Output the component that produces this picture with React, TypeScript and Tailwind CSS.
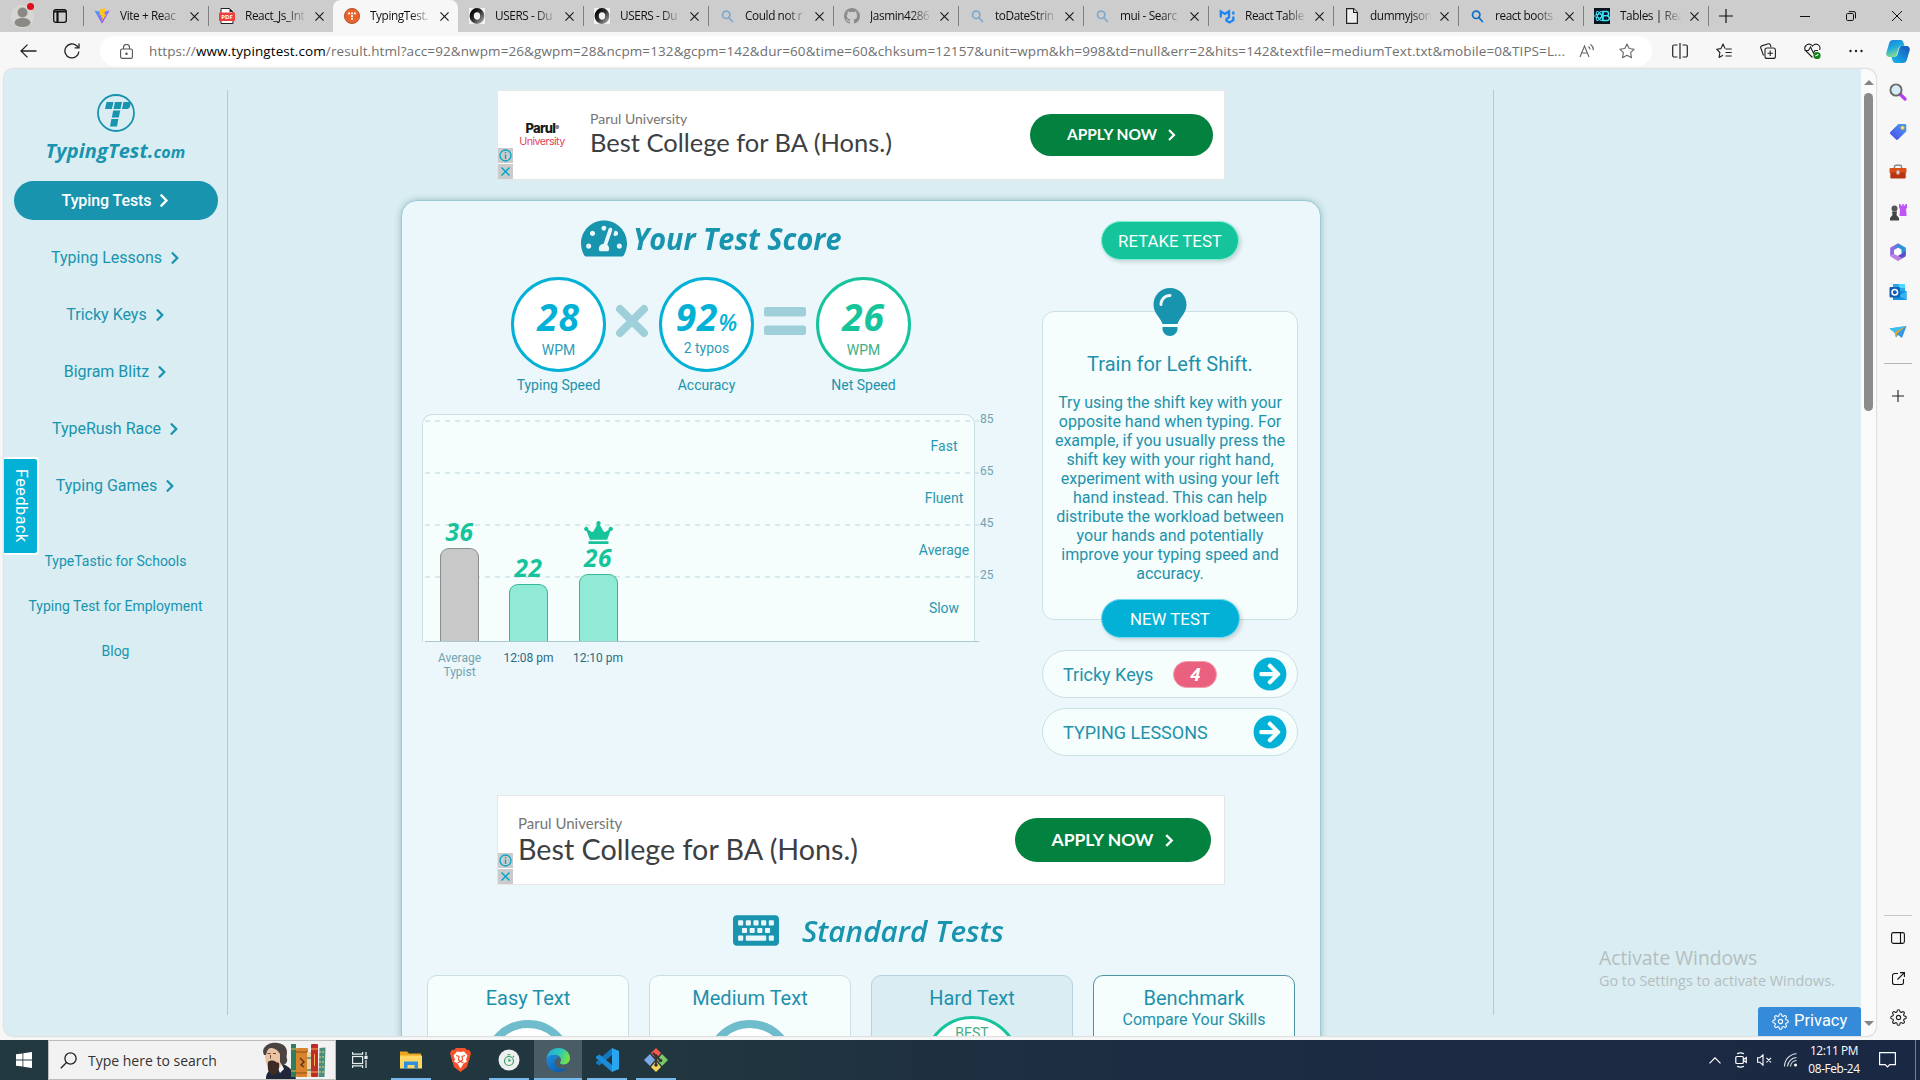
import React from "react";
import {
  FaTachometerAlt,
  FaCrown,
  FaKeyboard,
  FaArrowCircleRight,
  FaChevronRight,
} from "react-icons/fa";
import { FaLightbulb } from "react-icons/fa6";
import { FiSettings } from "react-icons/fi";

const SEGOE = "font-['Open_Sans','Noto_Sans',sans-serif]";

/* ---------- tab favicons ---------- */

const ViteIcon = () => (
  <svg viewBox="0 0 16 16" className="size-4">
    <defs>
      <linearGradient id="vt" x1="0" y1="0" x2="1" y2="1">
        <stop offset="0" stopColor="#41a8ff" />
        <stop offset="1" stopColor="#bd34fe" />
      </linearGradient>
    </defs>
    <path d="M0.3 2.5 8 15.8 15.7 2.5 8.2 3.9z" fill="url(#vt)" />
    <path d="M11.4.2 6 1.3 5.6 7.4l2-.4-.6 3 1.6-.5-1.2 4.2L12.6 6l-2.2.5z" fill="#ffc61c" />
  </svg>
);

const PdfIcon = () => (
  <svg viewBox="0 0 16 16" className="size-4">
    <path d="M2 .5h8.5l3.5 3.5v11.500H2z" fill="#fff" stroke="#222" />
    <path d="M10.500.5v3.500h3.500z" fill="#222" />
    <rect x="0" y="4.500" width="16" height="8.500" rx="1" fill="#f03c3c" />
    <text x="8" y="11" fontSize="6" fontWeight="700" fill="#fff" textAnchor="middle" fontFamily="Open Sans">
      PDF
    </text>
  </svg>
);

const TypingIcon = () => (
  <svg viewBox="0 0 16 16" className="size-4">
    <circle cx="8" cy="8" r="7.600" fill="#e8622a" stroke="#a8441c" strokeWidth=".8" />
    <g fill="#fff">
      <rect x="4" y="4.500" width="2" height="1.800" />
      <rect x="7" y="4.500" width="2" height="1.800" />
      <rect x="10" y="4.500" width="2" height="1.800" />
      <rect x="7" y="7.200" width="2" height="1.800" />
      <rect x="7" y="9.900" width="2" height="1.800" />
    </g>
  </svg>
);

const RingIcon = () => (
  <svg viewBox="0 0 16 16" className="size-4">
    <defs>
      <linearGradient id="rg" x1="0" y1="0" x2="1" y2="1">
        <stop offset="0" stopColor="#000" />
        <stop offset=".5" stopColor="#333" />
        <stop offset="1" stopColor="#999" />
      </linearGradient>
    </defs>
    <rect width="16" height="16" fill="#f2f2f2" />
    <ellipse cx="8" cy="8" rx="5.300" ry="5.800" fill="none" stroke="url(#rg)" strokeWidth="4.200" />
  </svg>
);

const SearchIcon = ({ c }: { c: string }) => (
  <svg viewBox="0 0 16 16" className="size-4" fill="none" stroke={c} strokeWidth="1.700">
    <circle cx="7.200" cy="6.800" r="3.700" />
    <path d="m9.800 9.500 3.600 4" strokeLinecap="round" />
  </svg>
);

const GithubIcon = () => (
  <svg viewBox="0 0 16 16" className="size-4" fill="#8c8c8c">
    <path d="M8 0C3.580 0 0 3.580 0 8c0 3.540 2.290 6.530 5.470 7.590.4.070.55-.17.55-.38 0-.19-.01-.82-.01-1.490-2.010.37-2.530-.49-2.690-.94-.09-.23-.48-.94-.82-1.130-.28-.15-.68-.52-.01-.53.63-.01 1.080.58 1.230.82.72 1.210 1.870.87 2.330.66.07-.52.28-.87.51-1.070-1.780-.2-3.640-.89-3.640-3.950 0-.87.31-1.590.82-2.150-.08-.2-.36-1.020.08-2.120 0 0 .67-.21 2.200.82a7.600 7.600 0 0 1 4 0c1.530-1.040 2.200-.82 2.200-.82.44 1.100.16 1.920.08 2.120.51.56.82 1.270.82 2.150 0 3.070-1.870 3.750-3.650 3.950.29.25.54.73.54 1.480 0 1.070-.01 1.930-.01 2.200 0 .21.15.46.55.38A8 8 0 0 0 8 0" />
  </svg>
);

const MuiIcon = () => (
  <svg viewBox="0 0 16 16" className="size-4" fill="none" stroke="#1a86f5" strokeWidth="2.300">
    <path d="M1.800 9.500V3.600L6 6l4-2.600v6L7.500 11v1.700l3 1.700 3.800-2.200V8.600" />
    <path d="M14.300 3.500v3" />
  </svg>
);

const FileIcon = () => (
  <svg viewBox="0 0 16 16" className="size-4" fill="#eee" stroke="#222" strokeWidth="1.200">
    <path d="M2.600.7h7l3.800 3.800v10.800H2.600z" />
    <path d="M9.600.7v3.800h3.800" />
  </svg>
);

const ReactBootIcon = () => (
  <svg viewBox="0 0 16 16" className="size-4" fill="none" stroke="#41e0fd">
    <rect width="16" height="16" fill="#07151c" stroke="none" />
    <ellipse cx="5.500" cy="8" rx="5" ry="2" />
    <ellipse cx="5.500" cy="8" rx="5" ry="2" transform="rotate(60 5.500 8)" />
    <ellipse cx="5.500" cy="8" rx="5" ry="2" transform="rotate(120 5.500 8)" />
    <path d="M9 3.500h3.500a2 2 0 0 1 0 4.300H9h4a2.300 2.300 0 0 1 0 4.700H9z" strokeWidth="1.600" fill="#07151c" />
  </svg>
);

const tabs: { title: string; icon: React.ReactNode; active?: boolean }[] = [
  { title: "Vite + Reac", icon: <ViteIcon /> },
  { title: "React_Js_Int", icon: <PdfIcon /> },
  { title: "TypingTest.", icon: <TypingIcon />, active: true },
  { title: "USERS - Du", icon: <RingIcon /> },
  { title: "USERS - Du", icon: <RingIcon /> },
  { title: "Could not r", icon: <SearchIcon c="#7fa9cf" /> },
  { title: "Jasmin4286", icon: <GithubIcon /> },
  { title: "toDateStrin", icon: <SearchIcon c="#7fa9cf" /> },
  { title: "mui - Searc", icon: <SearchIcon c="#7fa9cf" /> },
  { title: "React Table", icon: <MuiIcon /> },
  { title: "dummyjson", icon: <FileIcon /> },
  { title: "react boots", icon: <SearchIcon c="#0a6fc9" /> },
  { title: "Tables | Rea", icon: <ReactBootIcon /> },
];

const Close = () => (
  <svg viewBox="0 0 10 10" className="size-[9px]" stroke="#1b1b1b" strokeWidth="1.300">
    <path d="M.5.5l9 9M9.500.5l-9 9" />
  </svg>
);

function TabStrip() {
  return (
    <div className="flex h-8 items-center bg-[#cdcdcd]">
      <div className="flex w-[83px] shrink-0 items-center">
        <div className="relative ml-[11px] size-[23px] overflow-visible rounded-full bg-[#d8d6d2]">
          <svg viewBox="0 0 23 23" className="size-[23px]" fill="#8b8985">
            <circle cx="11.500" cy="7.500" r="5" />
            <ellipse cx="11.500" cy="17.500" rx="8" ry="4.500" />
          </svg>
          <span className="absolute -top-0.5 right-0 size-[7px] rounded-full bg-[#e00b1c]" />
        </div>
        <svg viewBox="0 0 14 14" className="ml-[19px] size-3.5" fill="none" stroke="#111" strokeWidth="1.300">
          <rect x=".7" y=".7" width="12.600" height="12.600" rx="2" />
          <path d="M1 2.500h12M4.500 3v10" strokeWidth="2.200" />
        </svg>
      </div>
      {tabs.map((t, i) => (
        <div
          key={i}
          className={
            t.active
              ? "relative flex h-8 w-[125px] shrink-0 items-center rounded-t-lg bg-[#f7f7f7]"
              : "relative flex h-8 w-[125px] shrink-0 items-center"
          }
        >
          {!t.active && i !== 3 && <span className="absolute left-0 h-5 w-px bg-[#7f7f7f]" />}
          <span className="ml-[11px] size-4">{t.icon}</span>
          <span
            className={`ml-[10px] w-[62px] whitespace-nowrap text-[11.8px] tracking-[-0.4px] text-[#111] [mask-image:linear-gradient(to_right,#000_66%,transparent)] ${SEGOE}`}
          >
            {t.title}
          </span>
          <span className="ml-[7.5px]">
            <Close />
          </span>
        </div>
      ))}
      <span className="h-5 w-px bg-[#7f7f7f]" />
      <svg viewBox="0 0 14 14" className="ml-[10px] size-3.5" stroke="#111" strokeWidth="1.200">
        <path d="M7 0v14M0 7h14" />
      </svg>
      <div className="ml-auto flex items-center">
        <svg viewBox="0 0 10 10" className="mr-[36px] size-2.5" stroke="#111">
          <path d="M0 5.500h10" />
        </svg>
        <svg viewBox="0 0 10 10" className="mr-[36px] size-2.5" fill="none" stroke="#111">
          <rect x=".5" y="2.500" width="7" height="7" rx="1.200" />
          <path d="M2.800.6H8a1.500 1.500 0 0 1 1.500 1.500v5.300" />
        </svg>
        <svg viewBox="0 0 10 10" className="mr-[18px] size-2.5" stroke="#111">
          <path d="M0 0l10 10M10 0L0 10" />
        </svg>
      </div>
    </div>
  );
}

function Toolbar() {
  return (
    <div className="flex h-[37px] items-center bg-[#f7f7f7] pt-px">
      <svg viewBox="0 0 17 14" className="ml-5 h-3.5 w-[17px]" fill="none" stroke="#222" strokeWidth="1.300">
        <path d="M16.500 7H1M7.500.6 1 7l6.500 6.400" />
      </svg>
      <svg viewBox="0 0 16 16" className="ml-[27px] size-4" fill="none" stroke="#222" strokeWidth="1.300">
        <path d="M14.900 8.500A7 7 0 1 1 12.700 2.800L14.500 4.500" />
        <path d="M15 .5v4.300h-4.300" />
      </svg>
      <div className="ml-[20px] flex h-[30px] w-[1552px] items-center rounded-full bg-white">
        <svg viewBox="0 0 13 15" className="ml-[20px] h-[15px] w-[13px] shrink-0" fill="none" stroke="#555" strokeWidth="1.100">
          <rect x=".6" y="5" width="11.800" height="9.400" rx="1.500" />
          <path d="M3.500 5V3.500a3 3 0 0 1 6 0V5" />
          <circle cx="6.500" cy="9.700" r=".7" fill="#555" />
        </svg>
        <span className={`ml-[16px] w-[1423px] shrink-0 whitespace-nowrap text-[13.5px] tracking-[0.105px] text-[#707070] ${SEGOE}`}>
          https://<span className="text-black">www.typingtest.com</span>
          /result.html?acc=92&amp;nwpm=26&amp;gwpm=28&amp;ncpm=132&amp;gcpm=142&amp;dur=60&amp;time=60&amp;chksum=12157&amp;unit=wpm&amp;kh=998&amp;td=null&amp;err=2&amp;hits=142&amp;textfile=mediumText.txt&amp;mobile=0&amp;TIPS=L...
        </span>
        <svg viewBox="0 0 16 16" className="ml-[7px] size-4" fill="none" stroke="#666" strokeWidth="1.100">
          <path d="M1 14 5.500 3 10 14M2.600 10h5.800M9.500 3.500a4 4 0 0 1 1.500 3M11.500 1.200a8 8 0 0 1 3 6" />
        </svg>
        <svg viewBox="0 0 16 16" className="ml-[24px] size-4" fill="none" stroke="#666" strokeWidth="1.100">
          <path d="m8 .9 2.200 4.600 5 .7-3.600 3.500.9 5L8 12.300l-4.500 2.400.9-5L.8 6.200l5-.7z" strokeLinejoin="round" />
        </svg>
      </div>
      <div className="flex items-center">
        <svg viewBox="0 0 16 16" className="ml-[20px] size-4" fill="none" stroke="#222" strokeWidth="1.200">
          <path d="M5.500 2H2.200A1.500 1.500 0 0 0 .7 3.500v9A1.500 1.500 0 0 0 2.200 14h3.300M10.500 2h3.300a1.500 1.500 0 0 1 1.500 1.500v9a1.500 1.500 0 0 1-1.500 1.500h-3.300M8 0v16" />
        </svg>
        <svg viewBox="0 0 16 16" className="ml-[28px] size-4" fill="none" stroke="#222" strokeWidth="1.100">
          <path d="M9 5.500 7 1 5 5.600l-4.400.6 3.300 3.300-.8 4.900L7 12.200M9.500 6h6.200M9.500 9.500h6.200M9.500 13h6.200" strokeLinejoin="round" />
        </svg>
        <svg viewBox="0 0 16 16" className="ml-[28px] size-4" fill="none" stroke="#222" strokeWidth="1.100">
          <rect x="5" y="5" width="10.400" height="10.400" rx="2" />
          <path d="M10.200 7.500v5.400M7.500 10.200h5.400M3.500 12.500.7 4.800a1.500 1.500 0 0 1 1-1.900L8.500.8a1.500 1.500 0 0 1 1.800 1L11 4" />
        </svg>
        <svg viewBox="0 0 17 16" className="ml-[28px] h-4 w-[17px]" fill="none" stroke="#222" strokeWidth="1.100">
          <path d="M8.500 14.500 2 8a4 4 0 0 1 0-5.500 4 4 0 0 1 6 0l.5.600.5-.600a4 4 0 0 1 6 0A4 4 0 0 1 15.500 7M.5 7.500h4L6.500 4l3 6 1.500-2.500h3" />
          <circle cx="13" cy="12.500" r="3.600" fill="#13801a" stroke="none" />
          <path d="m11.400 13 3-1.500" stroke="#fff" />
        </svg>
        <svg viewBox="0 0 16 4" className="ml-[27px] h-1 w-4" fill="#222">
          <circle cx="2.500" cy="2" r="1.200" />
          <circle cx="8" cy="2" r="1.200" />
          <circle cx="13.500" cy="2" r="1.200" />
        </svg>
        <svg viewBox="0 0 24 23" className="ml-[22px] h-[23px] w-6">
          <defs>
            <linearGradient id="cp1" x1="0" y1="0" x2=".4" y2="1">
              <stop offset="0" stopColor="#1681e0" />
              <stop offset=".5" stopColor="#1fa8dc" />
              <stop offset="1" stopColor="#86e08a" />
            </linearGradient>
            <linearGradient id="cp2" x1="0" y1="1" x2="1" y2="0">
              <stop offset="0" stopColor="#17b9f0" />
              <stop offset="1" stopColor="#1554b8" />
            </linearGradient>
          </defs>
          <path d="M7 0h7.500c2 0 2.700 1.500 3.200 3.200L18.500 6H16c-2 0-3 1-3.600 3l-1.800 6c-.6 1.600-1.500 2-3 2H3.500c-2.500 0-3.800-2-3.100-4.500L3.200 3C3.800 1 5 0 7 0" fill="url(#cp1)" />
          <path d="M17 23H9.500c-2 0-2.700-1.500-3.200-3.200L5.500 17H8c2 0 3-1 3.600-3l1.800-6c.6-1.600 1.500-2 3-2h4.100c2.500 0 3.800 2 3.100 4.500L20.800 20c-.6 2-1.800 3-3.800 3" fill="url(#cp2)" />
        </svg>
      </div>
    </div>
  );
}

/* ---------- page content ---------- */

const navItems = ["Typing Lessons", "Tricky Keys", "Bigram Blitz", "TypeRush Race", "Typing Games"];

function SiteNav() {
  return (
    <nav className="relative flex w-[223px] shrink-0 flex-col items-center pt-[25px] text-[#1894af]">
      <div className="flex w-[204px] flex-col items-center">
        <svg viewBox="0 0 38 38" className="size-[38px]">
          <circle cx="19" cy="19" r="18" fill="none" stroke="#1894af" strokeWidth="1.800" />
          <g fill="#1894af">
            <path d="M9.500 8h7l-1.600 7H8z" />
            <path d="M18 8h7l-1.500 7h-7z" />
            <path d="M26.500 8H34l-1 5-2 2h-6z" />
            <path d="M16.200 16.500h7L21.800 23.500h-7z" />
            <path d="M14.400 25h7L20 32.500h-7z" />
          </g>
        </svg>
        <div className="mt-[4px] flex h-[30px] items-baseline font-['Open_Sans',sans-serif] text-[20px] leading-[30px] font-bold tracking-[0.1px] italic">
          TypingTest.<span className="text-[16px]">com</span>
        </div>
      </div>
      <div className="mt-[15px] flex h-[39px] w-[204px] items-center justify-center gap-2 rounded-full bg-[#1894af] text-base font-medium tracking-[-0.1px] text-white">
        Typing Tests <FaChevronRight className="h-[15px] w-[10px]" />
      </div>
      <div className="mt-[9px] flex flex-col">
        {navItems.map((n) => (
          <div key={n} className="flex h-[57px] items-center justify-center gap-2 text-base">
            {n} <FaChevronRight className="h-[14px] w-[10px]" />
          </div>
        ))}
      </div>
      <div className="mt-[24px] flex flex-col items-center text-sm">
        {["TypeTastic for Schools", "Typing Test for Employment", "Blog"].map((n) => (
          <div key={n} className="flex h-[45px] items-center">
            {n}
          </div>
        ))}
      </div>
      <div className="absolute top-[388px] left-0 flex h-[98px] w-[35px] items-center justify-center rounded-r border-2 border-l-0 border-white bg-[#04b1d6]">
        <span className="text-base tracking-[0.6px] text-white [writing-mode:vertical-rl]">Feedback</span>
      </div>
    </nav>
  );
}

function AdBadges() {
  return (
    <div className="absolute bottom-0 left-0 flex flex-col gap-px">
      <svg viewBox="0 0 15 15" className="size-[15px] bg-[#cbcbcb]" fill="none" stroke="#00a6c7" strokeWidth="1.300">
        <circle cx="7.500" cy="7.500" r="5.500" />
        <path d="M7.500 6.500v4.500M7.500 4v1.300" />
      </svg>
      <svg viewBox="0 0 15 15" className="size-[15px] bg-[#cbcbcb]" stroke="#00a6c7" strokeWidth="1.500">
        <path d="m3.500 3.500 8 8M11.500 3.500l-8 8" />
      </svg>
    </div>
  );
}

function AdTop() {
  return (
    <div className="relative flex h-[90px] w-[728px] shrink-0 items-center border border-[#e6e6e6] bg-white">
      <div className="ml-[20px] w-[48px] text-center font-['Inter',sans-serif] leading-[13px]">
        <div className="text-[13px] font-extrabold tracking-[-0.7px] text-[#1a1a1a]">
          Parul<sup className="text-[6px]">®</sup>
        </div>
        <div className="text-[10.8px] tracking-[-0.6px] text-[#e4455b]">University</div>
      </div>
      <div className="-mt-1 ml-[24px]">
        <div className="font-['Lato',sans-serif] text-[14px] leading-[18px] text-[#757575]">Parul University</div>
        <div className="-mt-px font-['Lato',sans-serif] text-[25.5px] leading-[30px] whitespace-nowrap text-[#3c4043]">
          Best College for BA (Hons.)
        </div>
      </div>
      <div className="mr-[11px] ml-auto flex h-[42px] w-[183px] items-center justify-center gap-[11px] rounded-full bg-[#02813f] font-['Lato',sans-serif] text-[15.5px] font-bold text-white">
        APPLY NOW
        <svg viewBox="0 0 8 12" className="h-3 w-2" fill="none" stroke="#fff" strokeWidth="2.200">
          <path d="m1 1 5 5-5 5" />
        </svg>
      </div>
      <AdBadges />
    </div>
  );
}

function AdBottom() {
  return (
    <div className="relative mx-auto flex h-[90px] w-[728px] items-center border border-[#e6e6e6] bg-white">
      <div className="-mt-[2px] ml-[20px]">
        <div className="font-['Lato',sans-serif] text-[15px] leading-[18px] text-[#757575]">Parul University</div>
        <div className="mt-px font-['Lato',sans-serif] text-[28.7px] leading-[32px] whitespace-nowrap text-[#3c4043]">
          Best College for BA (Hons.)
        </div>
      </div>
      <div className="mr-[13px] ml-auto flex h-[44px] w-[196px] items-center justify-center gap-[12px] rounded-full bg-[#02813f] font-['Lato',sans-serif] text-[17.5px] font-bold text-white">
        APPLY NOW
        <svg viewBox="0 0 8 12" className="h-[13px] w-[9px]" fill="none" stroke="#fff" strokeWidth="2.200">
          <path d="m1 1 5 5-5 5" />
        </svg>
      </div>
      <AdBadges />
    </div>
  );
}

const NUM = "font-['Open_Sans',sans-serif] font-bold italic";

function Score({
  value,
  suffix,
  unit,
  label,
  green,
}: {
  value: string;
  suffix?: string;
  unit: string;
  label: string;
  green?: boolean;
}) {
  return (
    <div className="flex w-[95px] flex-col items-center">
      <div
        className={
          green
            ? "flex size-[95px] flex-col items-center rounded-full border-[3px] border-[#16c49b] bg-white text-[#16c49b]"
            : "flex size-[95px] flex-col items-center rounded-full border-[3px] border-[#04b1d6] bg-white text-[#04b1d6]"
        }
      >
        <div className={`mt-[17px] flex h-10 items-baseline text-[37px] leading-10 tracking-[0.8px] ${NUM}`}>
          {value}
          {suffix && <span className="text-[23px] font-semibold tracking-normal">{suffix}</span>}
        </div>
        <div className={green ? "mt-[3px] text-sm text-[#3fae85]" : suffix ? "mt-[1px] text-sm text-[#2b9db8]" : "mt-[3px] text-sm text-[#2b9db8]"}>
          {unit}
        </div>
      </div>
      <div className="mt-[3px] text-sm whitespace-nowrap text-[#2292ab]">{label}</div>
    </div>
  );
}

function Dash({ y }: { y: string }) {
  return (
    <div
      className={`absolute left-[2px] h-[2px] w-[554px] bg-[repeating-linear-gradient(90deg,#d5e9ee_0_5px,transparent_5px_10px)] ${y}`}
    />
  );
}

function Chart() {
  return (
    <div className="relative h-[228px] w-[553px] rounded-t-[10px] border border-b-0 border-[#c9dfe4] bg-[#f6fdfd]">
      <Dash y="top-[5px]" />
      <Dash y="top-[57px]" />
      <Dash y="top-[109px]" />
      <Dash y="top-[161px]" />
      <div className="absolute top-[-5px] left-[557px] flex flex-col text-[12px] text-[#70a3b1]">
        {["85", "65", "45", "25"].map((v) => (
          <span key={v} className="h-[52px] leading-[18px]">
            {v}
          </span>
        ))}
      </div>
      <div className="absolute top-[5px] right-0 flex w-[60px] flex-col text-center text-sm text-[#2a97b0]">
        {["Fast", "Fluent", "Average"].map((v) => (
          <span key={v} className="h-[52px] leading-[52px]">
            {v}
          </span>
        ))}
        <span className="h-[64px] leading-[64px]">Slow</span>
      </div>
      <div className="absolute bottom-0 left-[2px] flex h-[226px] w-[554px] items-end border-b border-[#a9c9cf]">
        <Bar v="36" box="h-[93px] border-[#8e8e8e] bg-[#c8c8c8]" />
        <Bar v="22" box="h-[57px] border-[#35b896] bg-[#90ead6]" />
        <Bar v="26" box="h-[67px] border-[#35b896] bg-[#90ead6]" crown />
      </div>
      <div className="absolute top-[236px] left-[2px] flex text-center text-[12px] leading-[14px] text-[#2d6b80]">
        <span className="w-[69px] text-[#70a3b1]">
          Average
          <br />
          Typist
        </span>
        <span className="w-[69px]">12:08 pm</span>
        <span className="w-[70px]">12:10 pm</span>
      </div>
    </div>
  );
}

function Bar({ v, box, crown }: { v: string; box: string; crown?: boolean }) {
  return (
    <div className={crown ? "flex w-[70px] flex-col items-center" : "flex w-[69px] flex-col items-center"}>
      {crown && <FaCrown className="h-[23px] w-[29px] text-[#16c49b]" />}
      <span className={`mb-[2px] text-[24.5px] leading-[28px] tracking-[0.6px] text-[#16c49b] ${NUM}`}>{v}</span>
      <div className={`w-[39px] rounded-t-[9px] border border-b-0 ${box}`} />
    </div>
  );
}

function PillLink({ text, badge }: { text: string; badge?: string }) {
  return (
    <div className="flex h-[48px] w-[256px] items-center rounded-full border border-[#cbe0e4] bg-[#f6fdfd] pr-[10px] pl-[20px] text-[18px] text-[#2292ab]">
      {text}
      {badge && (
        <span className="ml-[20px] flex h-[27px] w-[44px] items-center justify-center rounded-full border border-[#f59bae] bg-[#ea607f] font-['Open_Sans',sans-serif] text-[18px] font-bold text-white italic">
          {badge}
        </span>
      )}
      <FaArrowCircleRight className="ml-auto size-[34px] text-[#04b1d6]" />
    </div>
  );
}

function TestCard({ title, kind }: { title: string; kind: "plain" | "best" | "bench" }) {
  return (
    <div
      className={
        kind === "plain"
          ? "flex h-[200px] w-[202px] flex-col items-center rounded-[10px] border border-[#c9dfe4] bg-[#f6fdfd] pt-[8px]"
          : kind === "best"
            ? "flex h-[200px] w-[202px] flex-col items-center rounded-[10px] border border-[#b4d3dd] bg-[#d9edf2] pt-[8px]"
            : "flex h-[200px] w-[202px] flex-col items-center rounded-[10px] border border-[#4f93a5] bg-[#f6fdfd] pt-[8px]"
      }
    >
      <div className="text-[20px] leading-[28px] text-[#1d91ac]">{title}</div>
      {kind === "plain" && <div className="mt-[8px] size-[90px] rounded-full border-8 border-[#6fbccd] bg-white" />}
      {kind === "best" && (
        <div className="mt-[4px] flex size-[96px] justify-center rounded-full border-[3px] border-[#16c49b] bg-white pt-[4px] text-sm text-[#3fae85]">
          BEST
        </div>
      )}
      {kind === "bench" && <div className="mt-[-4px] text-[16px] text-[#2292ab]">Compare Your Skills</div>}
    </div>
  );
}

function ResultCard() {
  return (
    <div className="mt-[20px] flex h-[900px] w-[920px] shrink-0 flex-col rounded-2xl border border-[#9ecad3] bg-[#ebf7fa] shadow-[0_0_6px_rgba(60,120,135,0.4)]">
      <div className="flex h-[556px]">
        <div className="ml-[20px] flex w-[580px] flex-col">
          <div className="mt-[14px] ml-[159px] flex h-[46px] items-center">
            <FaTachometerAlt className="h-[41px] w-[46px] text-[#1894af]" />
            <span className={`mt-px ml-[6px] origin-left scale-x-[0.96] text-[30px] whitespace-nowrap text-[#1894af] ${NUM}`}>
              Your Test Score
            </span>
          </div>
          <div className="mt-[16px] ml-[89px] flex">
            <Score value="28" unit="WPM" label="Typing Speed" />
            <svg viewBox="0 0 34 34" className="mr-[10px] ml-[9px] mt-[27px] size-[34px]" stroke="#9fcfd9" strokeWidth="8" strokeLinecap="round">
              <path d="M5 5l24 24M29 5 5 29" />
            </svg>
            <Score value="92" suffix="%" unit="2 typos" label="Accuracy" />
            <svg viewBox="0 0 42 28" className="mx-[10px] mt-[30px] h-7 w-[42px]" fill="#9fcfd9">
              <rect width="42" height="9.500" rx="2.500" />
              <rect y="18.500" width="42" height="9.500" rx="2.500" />
            </svg>
            <Score value="26" unit="WPM" label="Net Speed" green />
          </div>
          <div className="mt-[19px]">
            <Chart />
          </div>
        </div>
        <div className="ml-[40px] flex w-[256px] flex-col items-center">
          <div className="mt-[20px] flex h-[39px] w-[138px] items-center justify-center rounded-full border border-[#7ff0d4] bg-[#16c49b] pt-[2px] text-[16.8px] text-white shadow-[2px_2px_4px_rgba(0,0,0,0.15)]">
            RETAKE TEST
          </div>
          <div className="relative mt-[51px] flex h-[309px] w-[256px] flex-col items-center rounded-xl border border-[#cbe0e4] bg-[#f6fdfd] text-[#2292ab]">
            <FaLightbulb className="absolute -top-6 h-[48px] w-[36px] text-[#1894af]" />
            <div className="mt-[39px] text-[20px] leading-[26px] text-[#1d91ac]">Train for Left Shift.</div>
            <p className="mt-[16px] w-[236px] text-center text-base leading-[19px]">
              Try using the shift key with your opposite hand when typing. For example, if you usually press the shift
              key with your right hand, experiment with using your left hand instead. This can help distribute the
              workload between your hands and potentially improve your typing speed and accuracy.
            </p>
            <div className="absolute -bottom-[19px] flex h-[39px] w-[139px] items-center justify-center rounded-full border border-[#6fdcf2] bg-[#04b1d6] pt-[2px] text-[16.8px] text-white shadow-[2px_2px_4px_rgba(0,0,0,0.15)]">
              NEW TEST
            </div>
          </div>
          <div className="mt-[30px] flex flex-col gap-[10px]">
            <PillLink text="Tricky Keys" badge="4" />
            <PillLink text="TYPING LESSONS" />
          </div>
        </div>
      </div>
      <div className="mt-[39px]">
        <AdBottom />
      </div>
      <div className="mt-[23px] ml-[331px] flex h-[46px] items-center">
        <FaKeyboard className="h-[41px] w-[46px] text-[#1894af]" />
        <span className="mt-px ml-[23px] origin-left scale-x-[1.025] font-['Open_Sans',sans-serif] text-[29px] font-semibold whitespace-nowrap text-[#1894af] italic">
          Standard Tests
        </span>
      </div>
      <div className="mt-[22px] ml-[25px] flex gap-[20px]">
        <TestCard title="Easy Text" kind="plain" />
        <TestCard title="Medium Text" kind="plain" />
        <TestCard title="Hard Text" kind="best" />
        <TestCard title="Benchmark" kind="bench" />
      </div>
    </div>
  );
}

function Page() {
  return (
    <div className="ml-1 flex h-[967px] w-[1872px] overflow-hidden rounded-[9px] bg-[#fafafa] shadow-[0_0_2px_rgba(0,0,0,0.35)]">
      <div className="relative flex w-[1857px] overflow-hidden bg-[#d9edf2] font-['Roboto',sans-serif]">
        <SiteNav />
        <div className="mt-[21px] h-[925px] w-px bg-[#a3cfd9]" />
        <div className="ml-px flex w-[1264px] flex-col items-center pt-[21px]">
          <AdTop />
          <ResultCard />
        </div>
        <div className="mt-[21px] h-[925px] w-px bg-[#a3cfd9]" />
        <div className={`absolute right-[24px] bottom-[45px] w-[238px] whitespace-nowrap text-[#b5bdc0] ${SEGOE}`}>
          <div className="text-[19.3px] leading-[26px]">Activate Windows</div>
          <div className="text-[14.4px] leading-[20px]">Go to Settings to activate Windows.</div>
        </div>
        <div className="absolute right-0 bottom-0 flex h-[29px] w-[103px] items-center rounded-t-[3px] bg-[#358bd9] pl-[14px] text-white">
          <FiSettings className="size-[17px]" strokeWidth={1.5} />
          <span className="ml-[5px] text-[16.500px]">Privacy</span>
        </div>
      </div>
      <div className="flex w-[15px] flex-col items-center pt-[11px]">
        <svg viewBox="0 0 10 5" className="h-[5px] w-[10px]" fill="#858585">
          <path d="M5 0l5 5H0z" />
        </svg>
        <div className="mt-[8px] h-[318px] w-[9px] rounded-full bg-[#8b8b8b]" />
        <svg viewBox="0 0 10 5" className="mt-auto mb-[10px] h-[5px] w-[10px]" fill="#858585">
          <path d="M5 5L0 0h10z" />
        </svg>
      </div>
    </div>
  );
}

function EdgeSidebar() {
  return (
    <div className="flex w-11 flex-col items-center pt-[14px]">
      <div className="flex flex-col gap-[22px]">
        <svg viewBox="0 0 18 18" className="size-[18px]">
          <path d="m11 11 5 5" stroke="#b53df0" strokeWidth="3.200" strokeLinecap="round" />
          <circle cx="7" cy="7" r="5.600" fill="#d3ecf7" stroke="#6a6a6a" strokeWidth="1.900" />
        </svg>
        <svg viewBox="0 0 18 18" className="size-[18px]">
          <defs>
            <linearGradient id="tg" x1="1" y1="0" x2="0" y2="1">
              <stop offset="0" stopColor="#45a1f5" />
              <stop offset="1" stopColor="#5145e8" />
            </linearGradient>
          </defs>
          <path d="M9.500 1H16a1.300 1.300 0 0 1 1.300 1.300v6L9 16.600a1.500 1.500 0 0 1-2 0L1.300 11a1.500 1.500 0 0 1 0-2z" fill="url(#tg)" />
          <circle cx="13.500" cy="4.800" r="1.500" fill="#fff" stroke="#f0c419" strokeWidth="1.200" />
        </svg>
        <svg viewBox="0 0 18 18" className="size-[18px]">
          <path d="M5.500 5V3.500A1.300 1.300 0 0 1 6.800 2.200h4.400a1.300 1.300 0 0 1 1.300 1.300V5" fill="none" stroke="#888" strokeWidth="1.500" />
          <rect x=".5" y="5" width="17" height="5" rx="1" fill="#d9501c" />
          <rect x="1.300" y="9.500" width="15.400" height="6" rx="1" fill="#b93410" />
          <rect x="7.500" y="7.500" width="3" height="4" rx="1" fill="#c9d3da" />
        </svg>
        <svg viewBox="0 0 18 18" className="size-[18px]">
          <path d="M10 1h1.700v1.500h1.600V1h1.500v1.500h1.500V1H18v4l-1 1 .6 7H10.500L11 6l-1-1z" fill="#c054f5" />
          <circle cx="5.500" cy="5.500" r="3" fill="#555" />
          <path d="M3 8.500h5L7.500 12l2.500 3v2.500H1V15l2.500-3z" fill="#444" />
        </svg>
        <svg viewBox="0 0 18 18" className="size-[18px]">
          <path d="M9 .3 1.200 4.800v8.400L5 11V7l4-2.500z" fill="#8d6be0" />
          <path d="M9 .3l7.800 4.500v7L12.500 10V6.500L9 4.500 6 6z" fill="#2f8fd8" />
          <path d="M16.800 8v5.200L9 17.700 3.500 14.500 9 12.800z" fill="#5a4fd0" />
          <path d="M1.200 13.200 9 17.700 13 15 5 11z" fill="#bf7ee0" />
          <path d="M9 5.500 12 7.300v3.400L9 12.500 6 10.700V7.300z" fill="#fff" />
        </svg>
        <svg viewBox="0 0 18 18" className="size-[18px]">
          <path d="M4 1h12v8H4z" fill="#28a8ea" />
          <path d="M10 1h6v4h-6z" fill="#50d9ff" />
          <path d="M4 8h13.500v9H4z" fill="#1490df" />
          <path d="M17.500 8 10 13l7.500 4z" fill="#37b5f2" />
          <rect x=".5" y="4" width="10.500" height="10.500" rx="1" fill="#0f5fb5" />
          <circle cx="5.800" cy="9.300" r="2.800" fill="none" stroke="#fff" strokeWidth="1.500" />
        </svg>
        <svg viewBox="0 0 18 18" className="size-[18px]">
          <path d="M.5 5.500 17.500 3 13 15l-4-3-2 2.500L5.500 9.500z" fill="#3597ea" />
          <path d="M.5 5.500 17.500 3 5.500 9.500z" fill="#37c0f0" />
          <path d="M17.500 3 5.500 9.500 7 14.500l1-4z" fill="#f7a51d" />
        </svg>
      </div>
      <div className="mt-[22px] h-px w-7 bg-[#b5b5b5]" />
      <svg viewBox="0 0 12 12" className="mt-[26px] size-3" stroke="#222" strokeWidth="1.100">
        <path d="M6 0v12M0 6h12" />
      </svg>
      <div className="mt-auto h-px w-7 bg-[#c8c8c8]" />
      <svg viewBox="0 0 14 12" className="mt-[16px] h-3 w-3.5" fill="none" stroke="#111" strokeWidth="1.100">
        <rect x=".6" y=".6" width="12.800" height="10.800" rx="1.800" />
        <path d="M9.500.6v10.800" />
      </svg>
      <svg viewBox="0 0 13 13" className="mt-[28px] size-[13px]" fill="none" stroke="#111" strokeWidth="1.100">
        <path d="M6 1.500H2.500a2 2 0 0 0-2 2v7a2 2 0 0 0 2 2h7a2 2 0 0 0 2-2V7M8 .6h4.400V5M12.400.6 5.500 7.500" />
      </svg>
      <FiSettings className="mt-[24px] mb-[10px] size-[17px] text-[#222]" strokeWidth={1.6} />
    </div>
  );
}

/* ---------- taskbar ---------- */

function SearchArt() {
  return (
    <svg viewBox="0 0 68 38" className="h-[38px] w-[68px]">
      <path d="M6 38c0-6 3-9 7-10l8-6c7 3 13 7 15 16z" fill="#1f2738" />
      <path d="M17 26l4-4 3 6-4 4z" fill="#f4f4f4" />
      <path d="M5 12c0-5 4-9 10-9s9 4 9 9v8l-5 7h-9c-4-2-5-8-5-15" fill="#e9c3a4" />
      <path d="M4 14C1 8 6 3 12 2c8-1.500 15 2 15 9 0 3-1 4 0 7s-2 6-5 6l-2-3V13c-2-4-6-6-9-6S7 10 6 14z" fill="#4a4340" />
      <path d="M8 21c2-2 6-2 8 0l3 1c1 7-2 12-6 12s-6-5-5-13" fill="#3c2c24" />
      <path d="M7.500 12.500h3M13 12.500h3M10.500 14v3.500" stroke="#6b4a38" fill="none" />
      <rect x="31" y="3" width="5" height="33" fill="#2f7e5b" />
      <path d="M31 8h5M31 30h5" stroke="#e8b64c" />
      <rect x="36" y="7" width="12" height="29" rx="1" fill="#d8842f" />
      <path d="M36 11h12M36 32h12" stroke="#8f4a15" />
      <path d="M40 17l4 4-3 3 3 2" stroke="#5a2f10" strokeWidth="1.400" fill="none" />
      <rect x="47" y="11" width="4" height="25" fill="#e6d3a8" />
      <path d="M47 17h4M47 29h4" stroke="#4c8e7b" strokeWidth="1.500" />
      <rect x="51" y="3" width="7" height="33" rx="1" fill="#bf2b27" />
      <path d="M51 8h7M51 31h7M54.500 13v12" stroke="#f0b54a" />
      <path d="m59.500 7 6-.5-1 29.500h-6z" fill="#4c8e7b" />
      <path d="M59 11h6M59 16h6M59 21h6M59 26h6M59 31h6" stroke="#ecd58f" strokeDasharray="2 1" />
    </svg>
  );
}

function App24({ children, line, active }: { children: React.ReactNode; line?: boolean; active?: boolean }) {
  return (
    <div
      className={
        active
          ? "relative flex h-10 w-12 items-center justify-center bg-[#4a5d66]"
          : "relative flex h-10 w-12 items-center justify-center"
      }
    >
      {children}
      {line && (
        <span
          className={
            active
              ? "absolute bottom-0 h-[2px] w-12 bg-[#76b9ed]"
              : "absolute bottom-0 h-[2px] w-10 bg-[#76b9ed]"
          }
        />
      )}
    </div>
  );
}

function Taskbar() {
  return (
    <div className="mt-[4px] flex h-10 items-center bg-[linear-gradient(90deg,#22383f_0%,#21363f_35%,#1c2c42_60%,#1b2843_100%)]">
      <svg viewBox="0 0 16 16" className="ml-4 size-4" fill="#fff">
        <path d="M0 2.300 6.500 1.400V7.600H0zM7.300 1.300 16 0v7.600H7.300zM0 8.400h6.500v6.200L0 13.700zM7.300 8.400H16V16l-8.700-1.300z" />
      </svg>
      <div className="ml-4 flex h-10 w-[288px] items-center border border-[#bdbdbd] bg-[#f2f2f2]">
        <svg viewBox="0 0 17 17" className="ml-[11px] size-[17px]" fill="none" stroke="#222" strokeWidth="1.300">
          <circle cx="10.500" cy="6.500" r="5.600" />
          <path d="M6.500 10.500.8 16.200" />
        </svg>
        <span className={`mt-px ml-[11px] text-[14px] whitespace-nowrap text-[#333] ${SEGOE}`}>Type here to search</span>
        <span className="mr-[7px] ml-auto">
          <SearchArt />
        </span>
      </div>
      <div className="flex">
        <App24>
          <svg viewBox="0 0 16 16" className="size-4" fill="none" stroke="#e8eef0" strokeWidth="1.200">
            <rect x=".6" y="4.500" width="10" height="7" />
            <path d="M.6 0v2.200h10V0M.6 16v-2.200h10V16M14 0v3.500M14 8v8" />
            <rect x="13" y="4.500" width="2" height="2" fill="#fff" />
          </svg>
        </App24>
      </div>
      <div className="ml-[3px] flex gap-px">
        <App24 line>
          <svg viewBox="0 0 24 20" className="h-5 w-6">
            <path d="M1 1.500h7l2 2h12V18H1z" fill="#e8a51d" />
            <path d="M1 5.500h22V18.500H1z" fill="#ffd765" />
            <path d="M5 19v-7.500h14V19h-3.500v-4h-7v4z" fill="#2f8fdd" />
          </svg>
        </App24>
        <App24>
          <svg viewBox="0 0 21 24" className="h-6 w-[21px]">
            <path d="M6 0h9l2 2 2-.3L21 5l-1 4-3 10-6.500 5L4 19 1 9 0 5l2-3.300L4 2z" fill="#f4512c" />
            <path d="M10.500 4 14 3.500l3.500 4-1.500 4 1 2-3.500 2-3 5-3-5-3.500-2 1-2-1.500-4L7 3.500z" fill="#fff" />
            <path d="M6 7.500 9 8.500 8.500 12l2 1.500 2-1.500-.5-3.500 3-1M7.500 15l3-1.500 3 1.500" fill="none" stroke="#f4512c" strokeWidth="1.200" />
          </svg>
        </App24>
        <App24 line>
          <svg viewBox="0 0 22 22" className="size-[22px]">
            <circle cx="11" cy="11" r="10.500" fill="#eef0ee" />
            <circle cx="11" cy="12" r="4.500" fill="none" stroke="#35a26a" strokeWidth="1.200" />
            <path d="M11 9.500V12l2-1M9.500 5.800h3M15 7l1 1" stroke="#35a26a" strokeWidth="1.100" fill="none" />
          </svg>
        </App24>
        <App24 line active>
          <svg viewBox="0 0 24 24" className="size-6">
            <defs>
              <linearGradient id="eg1" x1="0" y1="0" x2="1" y2=".3">
                <stop offset="0" stopColor="#1fa4dd" />
                <stop offset=".6" stopColor="#2dc8b8" />
                <stop offset="1" stopColor="#6fe04c" />
              </linearGradient>
              <linearGradient id="eg2" x1="0" y1="0" x2="1" y2="1">
                <stop offset="0" stopColor="#1b8fe0" />
                <stop offset="1" stopColor="#0b52a8" />
              </linearGradient>
            </defs>
            <path d="M.5 11C1 4.500 6 0 12.200 0 19 0 24 4.800 24 10.300c0 4-3 6.200-6.300 6.200-2.700 0-4-1-3.700-2 .2-.6 1-1.200 1-2.700C15 9 12 7 8.500 7 4.500 7 1.500 8.800.5 11" fill="url(#eg1)" />
            <path d="M.5 11C2 8 5 6.500 8.500 7 11 7.300 12.500 8.500 13 9.500 10 10 8.500 12 8.500 14.500c0 4 4 6.500 8 6.500 2 0 4-1 5-1.500C19.500 22.500 16 24 12 24 5 24 0 18.500.5 11" fill="url(#eg2)" />
          </svg>
        </App24>
        <App24 line>
          <svg viewBox="0 0 24 24" className="size-6">
            <path d="M17 0 24 3v18l-7 3z" fill="#2aa5f0" />
            <path d="M17 0v7L4.500 17.500 1 15.500 1 14z" fill="#1478bd" />
            <path d="M17 24v-7L4.500 6.500 1 8.500V10z" fill="#1c8cd6" />
          </svg>
        </App24>
        <App24 line>
          <svg viewBox="0 0 24 24" className="size-6">
            <path d="M12 0 17 5l-5 6-5-6z" fill="#f25a4c" />
            <path d="M6 6l5 6-5 6-6-6z" fill="#7da9e8" />
            <path d="M18 6l6 6-6 6-5-6z" fill="#7cc96a" />
            <path d="M12 13l5 6-5 5-5-5z" fill="#f5d65b" />
            <path d="M9 5l8 8M12 8v9" stroke="#3a3330" strokeWidth="1.800" />
            <circle cx="12" cy="8" r="1.800" fill="#3a3330" />
            <circle cx="16.500" cy="12.500" r="1.800" fill="#3a3330" />
            <circle cx="12" cy="17" r="1.800" fill="#3a3330" />
          </svg>
        </App24>
      </div>
      <div className="ml-auto flex items-center text-white">
        <svg viewBox="0 0 12 7" className="h-[7px] w-3" fill="none" stroke="#fff" strokeWidth="1.200">
          <path d="M.5 6.300 6 .8l5.500 5.500" />
        </svg>
        <svg viewBox="0 0 12 16" className="ml-[14px] h-4 w-3" fill="none" stroke="#fff" strokeWidth="1.200">
          <rect x=".8" y="4.500" width="7.500" height="7" rx="1" />
          <path d="m8.500 7.500 2.800-1.800v4.600L8.500 8.500M2 1.800c2-1 5-1 7 0M2 14.200c2 1 5 1 7 0" />
        </svg>
        <svg viewBox="0 0 15 12" className="ml-[10px] h-3 w-[15px]" fill="none" stroke="#fff" strokeWidth="1.100">
          <path d="M.6 3.800h2.200L6 .8v10.400l-3.200-3H.6zM9.500 3.800 14 8.300M14 3.800 9.500 8.300" />
        </svg>
        <svg viewBox="0 0 14 14" className="ml-[12px] size-3.5" fill="none" stroke="#dfe5ea" strokeWidth="1.100">
          <path d="M.6 13.500A12.500 12.500 0 0 1 12.500.8M3.500 13.500a9.500 9.500 0 0 1 9-9M6.500 13.500a6.500 6.500 0 0 1 6-6" />
          <circle cx="11.500" cy="12" r="1.500" fill="#fff" stroke="none" />
        </svg>
        <div className={`-mt-0.5 ml-[8px] w-[56px] text-center text-[11.9px] leading-[18px] tracking-[-0.4px] whitespace-nowrap ${SEGOE}`}>
          <div>12:11 PM</div>
          <div>08-Feb-24</div>
        </div>
        <svg viewBox="0 0 17 16" className="ml-[17px] h-4 w-[17px]" fill="none" stroke="#fff" strokeWidth="1.200">
          <path d="M.6.6h15.800v12h-5.600L8.500 15l-2.300-2.400H.6z" />
        </svg>
        <span className="mr-[4px] ml-[19px] h-10 w-px bg-[#76808f]" />
      </div>
    </div>
  );
}

export default function App() {
  return (
    <div className="h-[1080px] w-[1920px] overflow-hidden bg-[#f7f7f7]">
      <TabStrip />
      <Toolbar />
      <div className="flex h-[967px]">
        <Page />
        <EdgeSidebar />
      </div>
      <Taskbar />
    </div>
  );
}
